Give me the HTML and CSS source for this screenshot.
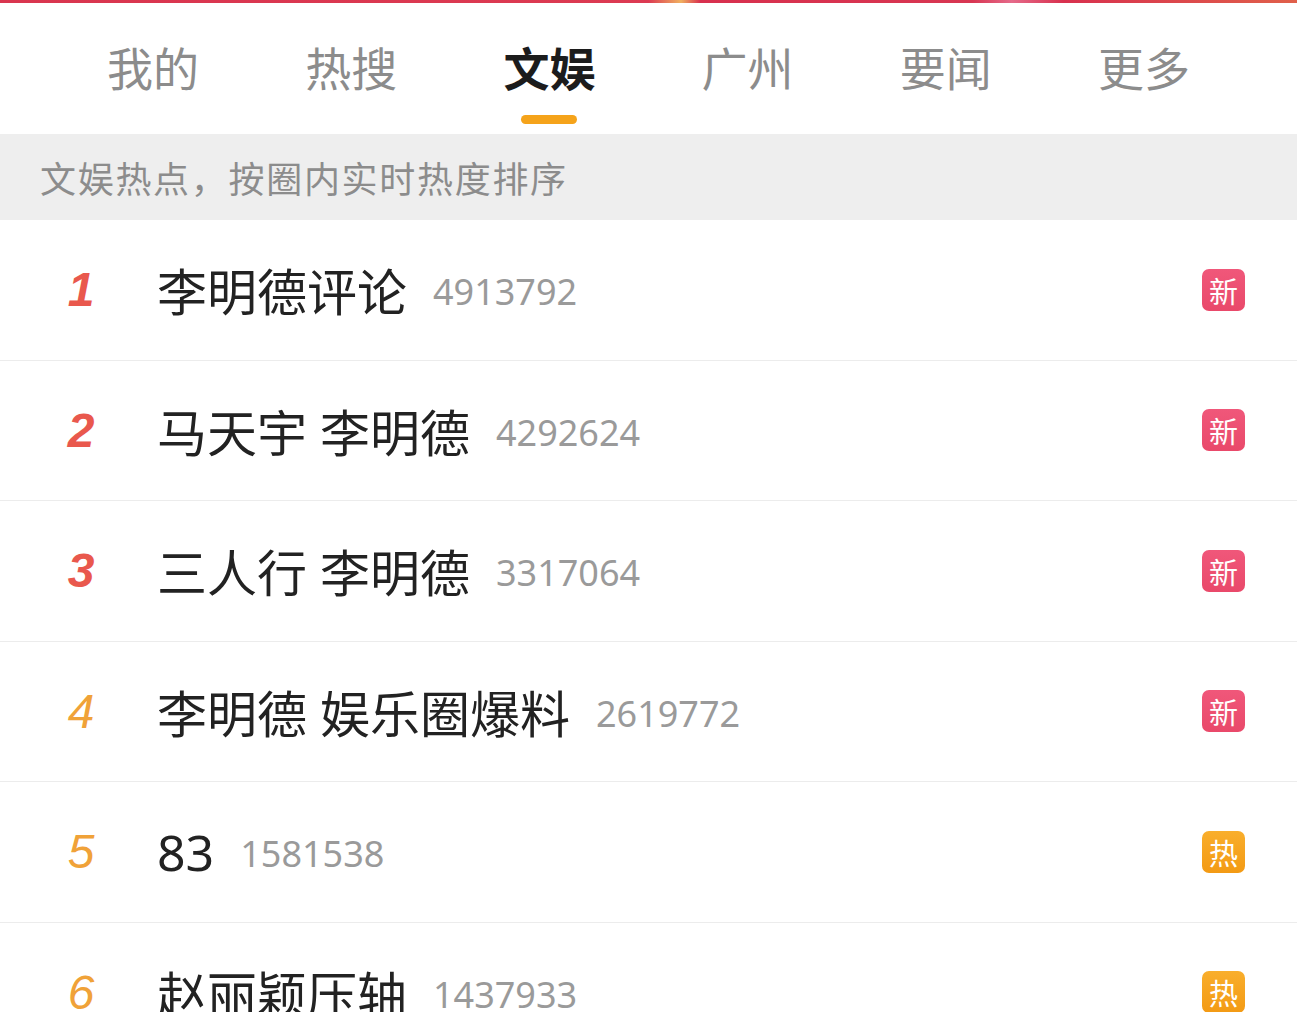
FILE: index.html
```html
<!DOCTYPE html>
<html lang="zh-CN">
<head>
  <meta charset="UTF-8" />
  <meta name="viewport" content="width=device-width, initial-scale=1.0" />
  <title>文娱热搜</title>
  <link rel="stylesheet" href="styles.css">
</head>
<body>
  <div class="top-strip"></div>

  <nav class="tabs">
    <div class="tab">我的</div>
    <div class="tab">热搜</div>
    <div class="tab active">文娱<span class="tab-line"></span></div>
    <div class="tab">广州</div>
    <div class="tab">要闻</div>
    <div class="tab">更多</div>
  </nav>

  <div class="sub-head">文娱热点，按圈内实时热度排序</div>

  <ul class="hot-list">
    <li class="hot-row">
      <span class="rank top">1</span>
      <span class="title">李明德评论</span>
      <span class="count">4913792</span>
      <span class="badge new">新</span>
    </li>
    <li class="hot-row">
      <span class="rank top">2</span>
      <span class="title">马天宇 李明德</span>
      <span class="count">4292624</span>
      <span class="badge new">新</span>
    </li>
    <li class="hot-row">
      <span class="rank top">3</span>
      <span class="title">三人行 李明德</span>
      <span class="count">3317064</span>
      <span class="badge new">新</span>
    </li>
    <li class="hot-row">
      <span class="rank">4</span>
      <span class="title">李明德 娱乐圈爆料</span>
      <span class="count">2619772</span>
      <span class="badge new">新</span>
    </li>
    <li class="hot-row">
      <span class="rank">5</span>
      <span class="title">83</span>
      <span class="count">1581538</span>
      <span class="badge hot">热</span>
    </li>
    <li class="hot-row">
      <span class="rank">6</span>
      <span class="title">赵丽颖压轴</span>
      <span class="count">1437933</span>
      <span class="badge hot">热</span>
    </li>
  </ul>
</body>
</html>
```

FILE: styles.css
```css
:root {
  --text: #222222;
  --muted: #8c8c8c;
  --count: #9a9a9a;
  --line: #ececec;
  --accent: #f5a31a;
  --rank-top: #e9584d;
  --rank: #f0a238;
}

* {
  box-sizing: border-box;
}

html, body {
  margin: 0;
  padding: 0;
  width: 100%;
  height: 100%;
  overflow: hidden;
  background: #ffffff;
  font-family: 'Noto Sans', 'Noto Sans CJK SC', sans-serif;
  color: var(--text);
}

.top-strip {
  height: 3px;
  background: linear-gradient(90deg, #d9354f 0%, #dc3a52 50%, #f0b060 52.5%, #d8304e 54%, #d83652 75%, #e56a8a 78%, #d8304e 82%, #e0604a 100%);
}

.tabs {
  display: flex;
  height: 131px;
  padding: 0 54px 0 54px;
}

.tab {
  flex: 1;
  display: flex;
  flex-direction: column;
  align-items: center;
  padding-top: 36px;
  font-family: 'Noto Sans CJK SC', sans-serif;
  font-size: 46px;
  line-height: 55px;
  color: var(--muted);
}

.tab.active {
  color: #1c1c1c;
  font-weight: 700;
}

.tab-line {
  display: block;
  width: 56px;
  height: 9px;
  margin-top: 21px;
  border-radius: 5px;
  background: var(--accent);
}

.sub-head {
  height: 86px;
  display: flex;
  align-items: center;
  padding-left: 40px;
  background: #eeeeee;
  font-family: 'Noto Sans CJK SC', sans-serif;
  font-size: 36px;
  letter-spacing: 1.7px;
  color: var(--muted);
}

.hot-list {
  list-style: none;
  margin: 0;
  padding: 0;
}

.hot-row {
  display: flex;
  align-items: center;
  height: 140.5px;
  padding: 0 52px 0 50px;
  border-bottom: 1px solid var(--line);
}

.rank {
  width: 62px;
  flex: none;
  margin-right: 45px;
  text-align: center;
  font-family: 'Liberation Sans', sans-serif;
  font-style: italic;
  font-size: 48px;
  color: var(--rank);
}

.rank.top {
  font-weight: 700;
  color: var(--rank-top);
}

.title {
  font-family: 'Noto Sans', 'Noto Sans CJK SC', sans-serif;
  font-size: 50px;
  color: var(--text);
}

.count {
  margin-left: 26px;
  margin-top: 4px;
  font-family: 'Noto Sans', sans-serif;
  font-size: 36px;
  color: var(--count);
}

.badge {
  margin-left: auto;
  width: 43px;
  height: 42px;
  border-radius: 7px;
  display: flex;
  align-items: center;
  justify-content: center;
  font-family: 'Noto Sans CJK SC', sans-serif;
  font-size: 29px;
  color: #ffffff;
}

.badge.new {
  background: linear-gradient(180deg, #f0577a 0%, #e9496a 100%);
}

.badge.hot {
  background: linear-gradient(180deg, #f9ae2c 0%, #f39a14 100%);
}
```
